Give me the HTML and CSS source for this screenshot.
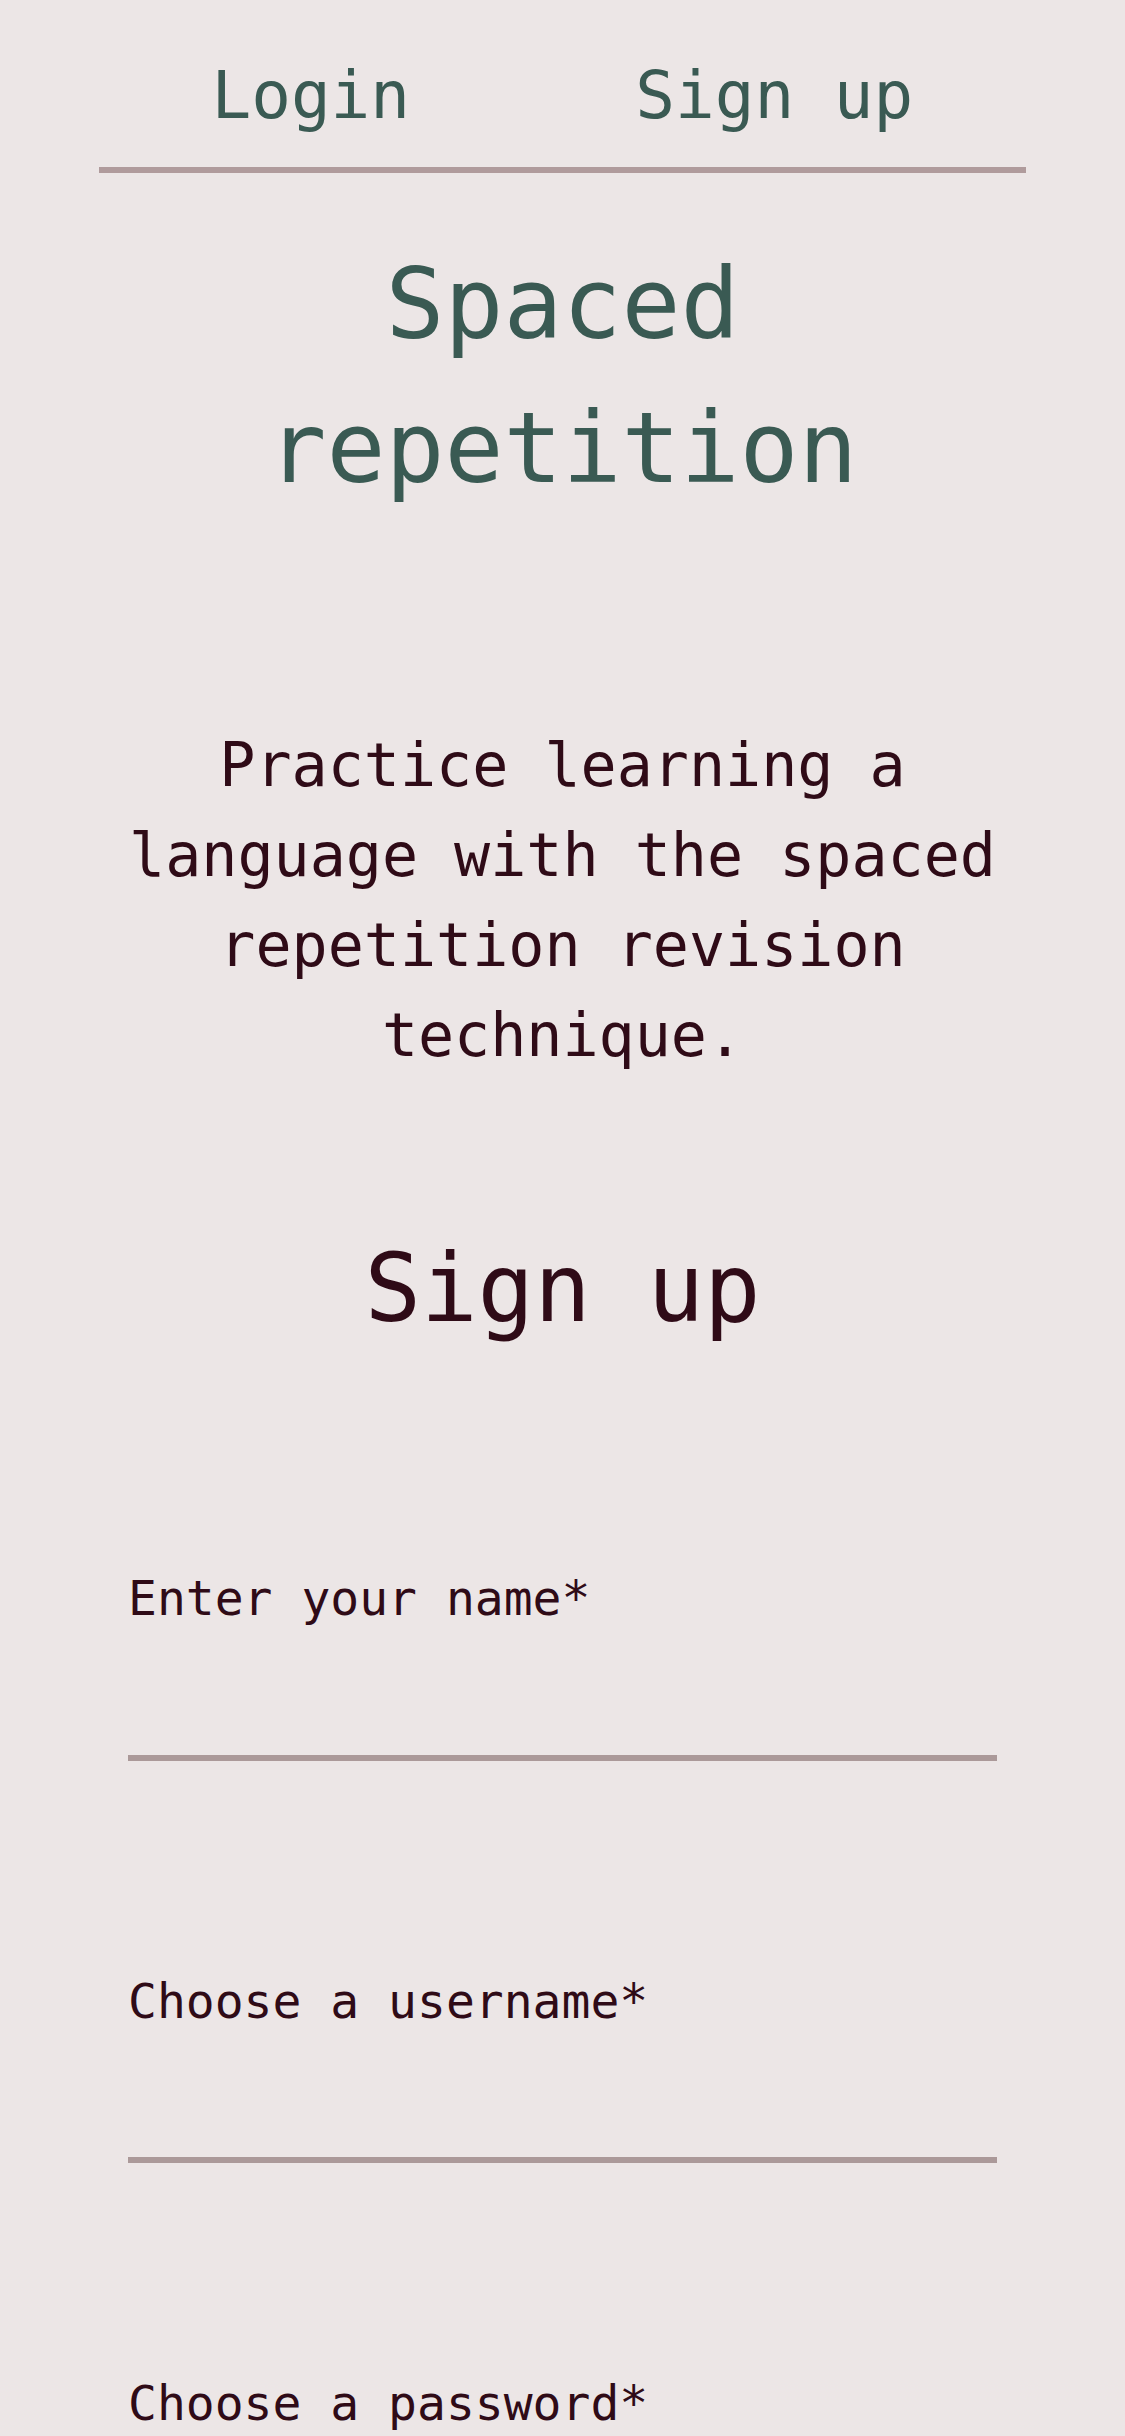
FILE: index.html
```html
<!DOCTYPE html>
<html lang="en">
<head>
<meta charset="utf-8">
<title>Spaced repetition – Sign up</title>
<link rel="stylesheet" href="styles.css">
</head>
<body>
  <nav class="tabs">
    <a class="tab" href="#">Login</a>
    <a class="tab" href="#">Sign up</a>
  </nav>
  <main class="page">
    <h1 class="title">Spaced repetition</h1>
    <p class="intro">Practice learning a language with the spaced repetition revision technique.</p>
    <h2 class="form-title">Sign up</h2>
    <form class="form">
      <div class="field">
        <label class="label" for="name">Enter your name*</label>
        <input class="input" id="name" type="text">
      </div>
      <div class="field">
        <label class="label" for="username">Choose a username*</label>
        <input class="input" id="username" type="text">
      </div>
      <div class="field">
        <label class="label" for="password">Choose a password*</label>
        <input class="input" id="password" type="password">
      </div>
    </form>
  </main>
</body>
</html>
```

FILE: styles.css
```css
html, body {
  margin: 0;
  padding: 0;
}

body {
  background: #ece6e6;
  font-family: "DejaVu Sans Mono", "Liberation Mono", monospace;
  color: #2f0b17;
}

.tabs {
  display: flex;
  margin: 0 99px;
  padding: 56px 0 32px;
  border-bottom: 6px solid #b09b9c;
}

.tab {
  flex: 1;
  text-align: center;
  padding-right: 40px;
  font-size: 66px;
  line-height: 1.2;
  color: #3a5a53;
  text-decoration: none;
}

.page {
  display: flex;
  flex-direction: column;
  align-items: center;
}

.title {
  margin: 59px 0 0;
  width: 869px;
  text-align: center;
  font-size: 98px;
  font-weight: normal;
  line-height: 144px;
  color: #3a5a53;
}

.intro {
  margin: 200px 0 0;
  width: 965px;
  text-align: center;
  font-size: 60px;
  line-height: 90px;
}

.form-title {
  margin: 153px 0 0;
  font-size: 94px;
  font-weight: normal;
  line-height: 1.2;
}

.form {
  margin-top: 224px;
  width: 869px;
  display: flex;
  flex-direction: column;
  gap: 212px;
}

.field {
  display: flex;
  flex-direction: column;
}

.label {
  font-size: 48px;
  line-height: 1.2;
}

.input {
  appearance: none;
  -webkit-appearance: none;
  box-sizing: content-box;
  height: 127px;
  margin: 0;
  padding: 0;
  border: none;
  border-bottom: 6px solid #ab9999;
  border-radius: 0;
  background: transparent;
  font-family: inherit;
  font-size: 48px;
  color: inherit;
  outline: none;
}
```
